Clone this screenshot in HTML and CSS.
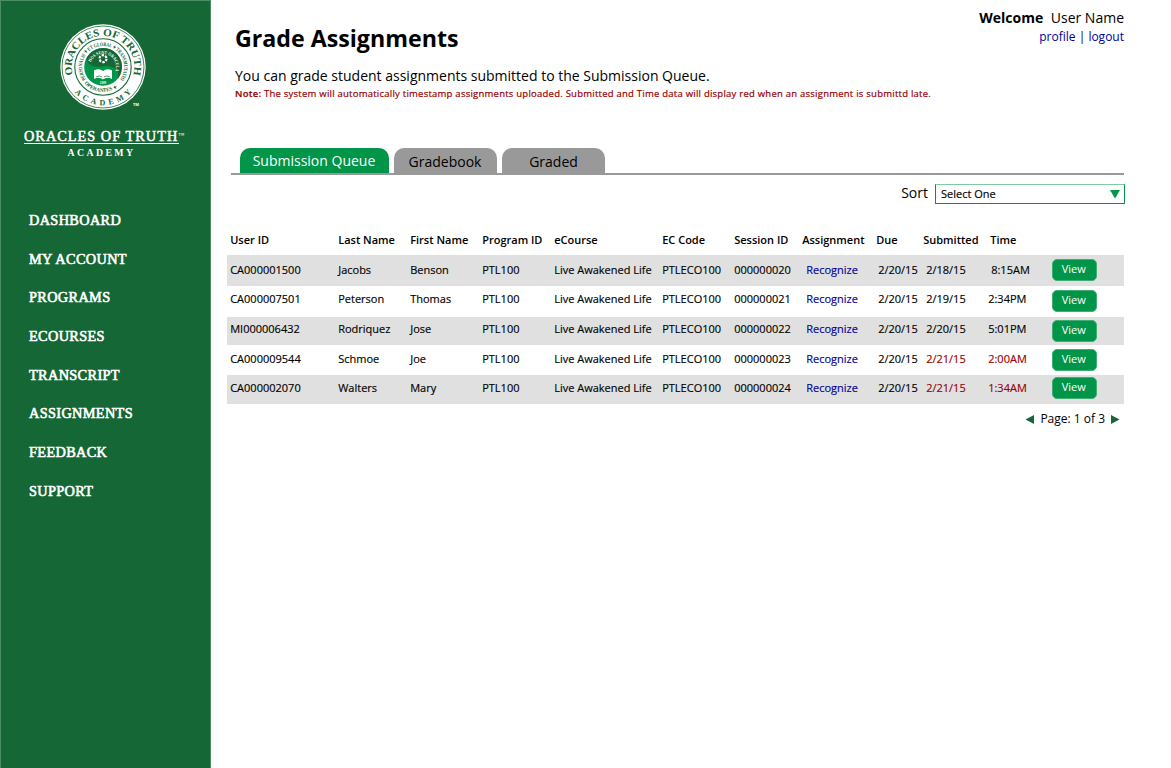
FILE: index.html
```html
<!DOCTYPE html>
<html lang="en">
<head>
<meta charset="utf-8">
<title>Grade Assignments</title>
<link rel="stylesheet" href="styles.css">
</head>
<body>
<div class="app">
  <aside class="sidebar">
    <svg class="seal" viewBox="-45 -45 90 90" aria-label="Oracles of Truth Academy">
      <defs>
        <path id="outer-arc" d="M0 31.2A31.2 31.2 0 1 1 .1 31.2"/>
        <path id="outer-bottom" d="M-38.2 0A38.2 38.2 0 0 0 38.2 0"/>
        <path id="inner-arc" d="M0 21A21 21 0 1 1 .1 21"/>
        <path id="inner-bottom" d="M-24.8 0A24.8 24.8 0 0 0 24.8 0"/>
        <path id="motto-arc" d="M-13 0A13 13 0 0 1 13 0A13 13 0 0 1 11.5 6"/>
      </defs>
      <circle r="42.7" fill="#fff"/>
      <circle r="41" fill="none" stroke="#156735" stroke-width=".8"/>
      <circle r="28.2" fill="#fff" stroke="#156735" stroke-width="1.1"/>
      <circle r="18.8" fill="#009548"/>
      <path d="M-16.3 -9.2A18.8 18.8 0 1 1 14.5 12C18 2 10 -1 2 -1C-8 1 -16 -1 -16.3 -9.2Z" fill="#156735"/>
      <g class="seal-text">
        <text font-size="10.4"><textPath href="#outer-arc" startOffset="50%" text-anchor="middle" textLength="114" lengthAdjust="spacingAndGlyphs">ORACLES OF TRUTH</textPath></text>
        <text font-size="8"><textPath href="#outer-bottom" startOffset="50%" text-anchor="middle" textLength="64">ACADEMY</textPath></text>
        <text font-size="5.4"><textPath href="#inner-arc" startOffset="50%" text-anchor="middle" textLength="92" lengthAdjust="spacingAndGlyphs">PERSONALIS ✦ ET GLOBAL ✦ TRANSMUTATIO</textPath></text>
        <text font-size="5.2"><textPath href="#inner-bottom" startOffset="46%" text-anchor="middle" textLength="36">OPERANTES ✦</textPath></text>
        <text font-size="4.6" class="motto"><textPath href="#motto-arc" startOffset="53%" text-anchor="middle" textLength="40" lengthAdjust="spacingAndGlyphs">HOS SUNT ORACULA</textPath></text>
        <text x="0" y="16.6" font-size="3.2" text-anchor="middle" class="motto">2009</text>
      </g>
      <circle cy="-8.3" r="3.5" fill="none" stroke="#fff" stroke-width="2.2" stroke-dasharray="2.4 1.265"/>
      <path d="M-9 3.5Q-4 1 0 4Q4 1 9 3.5V12Q4 9.5 0 12.5Q-4 9.5 -9 12Z" fill="#fff"/>
      <path d="M-7 10Q-3.5 8 -1 9.8M7 10Q3.5 8 1 9.8" fill="none" stroke="#156735" stroke-width=".7"/>
      <text x="30" y="38.7" font-size="4" class="trade">TM</text>
    </svg>
    <div class="brand">
      <div class="brand-name">ORACLES OF TRUTH<span class="tm">™</span></div>
      <div class="brand-sub">ACADEMY</div>
    </div>
    <nav class="nav">
      <a>DASHBOARD</a><a>MY ACCOUNT</a><a>PROGRAMS</a><a>ECOURSES</a><a>TRANSCRIPT</a><a>ASSIGNMENTS</a><a>FEEDBACK</a><a>SUPPORT</a>
    </nav>
  </aside>
  <main class="main">
    <header class="header">
      <div class="intro">
        <h1 class="title">Grade Assignments</h1>
        <p class="lead">You can grade student assignments submitted to the Submission Queue.</p>
        <p class="note"><b>Note:</b> The system will automatically timestamp assignments uploaded. Submitted and Time data will display red when an assignment is submittd late.</p>
      </div>
      <div class="user">
        <div class="welcome"><b>Welcome</b>User Name</div>
        <div class="links"><a>profile</a> | <a>logout</a></div>
      </div>
    </header>
    <div class="tabs">
      <div class="tab tab-active">Submission Queue</div>
      <div class="tab">Gradebook</div>
      <div class="tab tab-last">Graded</div>
    </div>
    <div class="sort">
      <span>Sort</span>
      <div class="select"><span>Select One</span><svg width="10" height="9" viewBox="0 0 10 9"><path d="M0 0H10L5 8.6Z" fill="#009548"/></svg></div>
    </div>
    <div class="table">
      <div class="row head"><span>User ID</span><span>Last Name</span><span>First Name</span><span>Program ID</span><span>eCourse</span><span>EC Code</span><span>Session ID</span><span>Assignment</span><span>Due</span><span>Submitted</span><span>Time</span></div>
      <div class="row r1"><span>CA000001500</span><span>Jacobs</span><span>Benson</span><span>PTL100</span><span>Live Awakened Life</span><span>PTLECO100</span><span>000000020</span><a>Recognize</a><span>2/20/15</span><span>2/18/15</span><span class="time">8:15AM</span><button class="view">View</button></div>
      <div class="row r2"><span>CA000007501</span><span>Peterson</span><span>Thomas</span><span>PTL100</span><span>Live Awakened Life</span><span>PTLECO100</span><span>000000021</span><a>Recognize</a><span>2/20/15</span><span>2/19/15</span><span class="time">2:34PM</span><button class="view">View</button></div>
      <div class="row r3"><span>MI000006432</span><span>Rodriquez</span><span>Jose</span><span>PTL100</span><span>Live Awakened Life</span><span>PTLECO100</span><span>000000022</span><a>Recognize</a><span>2/20/15</span><span>2/20/15</span><span class="time">5:01PM</span><button class="view">View</button></div>
      <div class="row r4"><span>CA000009544</span><span>Schmoe</span><span>Joe</span><span>PTL100</span><span>Live Awakened Life</span><span>PTLECO100</span><span>000000023</span><a>Recognize</a><span>2/20/15</span><span class="late">2/21/15</span><span class="time late">2:00AM</span><button class="view">View</button></div>
      <div class="row r5"><span>CA000002070</span><span>Walters</span><span>Mary</span><span>PTL100</span><span>Live Awakened Life</span><span>PTLECO100</span><span>000000024</span><a>Recognize</a><span>2/20/15</span><span class="late">2/21/15</span><span class="time late">1:34AM</span><button class="view">View</button></div>
    </div>
    <div class="pager">
      <svg width="9" height="9" viewBox="0 0 9 9"><path d="M9 0V9L.5 4.5Z" fill="#156735"/></svg>
      <span>Page: 1 of 3</span>
      <svg width="9" height="9" viewBox="0 0 9 9"><path d="M0 0V9L8.5 4.5Z" fill="#156735"/></svg>
    </div>
  </main>
</div>
</body>
</html>
```
FILE: styles.css
```css
* { box-sizing: border-box; }
body { margin: 0; background: #fff; color: #000; font-family: "Open Sans", sans-serif; }
.app { display: flex; width: 1171px; height: 768px; overflow: hidden; }
.sidebar { width: 211px; flex: none; background: #156735; border: 1px solid #4c8c66; border-bottom: 0; color: #fff; font-family: "Liberation Serif", serif; }
.seal { display: block; width: 90px; height: 90px; margin: 21px 0 0 57px; overflow: visible; }
.seal-text { font-family: "Liberation Serif", serif; font-weight: bold; fill: #156735; }
.seal-text .motto { fill: #fff; }
.trade { fill: #fff; font-family: "Open Sans", sans-serif; font-weight: bold; }
.brand { width: 155px; margin: 15px 0 0 23px; white-space: nowrap; }
.brand-name { height: 17px; line-height: 17px; border-bottom: 1px solid #fff; font-size: 14.3px; -webkit-text-stroke: .5px #fff; letter-spacing: 1.02px; }
.tm { font-size: 6px; vertical-align: 4px; letter-spacing: 0; -webkit-text-stroke: 0; }
.brand-sub { margin-top: 3px; line-height: 12px; text-align: center; font-size: 9.8px; font-weight: bold; letter-spacing: 2.4px; }
.nav { display: flex; flex-direction: column; margin: 46px 0 0 28px; }
.nav a { height: 38.7px; line-height: 30px; font-size: 14.3px; letter-spacing: .35px; -webkit-text-stroke: .6px #fff; white-space: nowrap; }
.main { width: 914px; padding-left: 16px; }
.header { display: flex; justify-content: space-between; width: 897px; height: 148px; padding-left: 8px; }
.intro { width: 720px; white-space: nowrap; }
.title { margin: 22px 0 0; font-size: 23.2px; line-height: 32px; font-weight: 700; }
.lead { margin: 12px 0 0; font-size: 14px; line-height: 20px; }
.note { margin: 0; font-size: 9.5px; line-height: 15px; color: #990000; letter-spacing: .24px; -webkit-text-stroke: .2px #990000; }
.note b { font-weight: 600; }
.user { text-align: right; white-space: nowrap; }
.welcome { margin-top: 8px; font-size: 14px; line-height: 20px; }
.welcome b { margin-right: 7.5px; }
.links { font-size: 12px; line-height: 18px; }
a { color: #000099; }
.nav a { color: #fff; }
.tabs { display: flex; gap: 5px; width: 893px; height: 27px; margin-left: 4px; padding-left: 9px; border-bottom: 2px solid #999; }
.tab { width: 103px; height: 25px; padding-right: 1px; border-radius: 10px 10px 0 0; background: #999; text-align: center; font-size: 14px; line-height: 27px; }
.tab-active { width: 149px; background: #009548; color: #fff; line-height: 25px; }
.tab-last { padding-right: 0; }
.sort { display: flex; justify-content: flex-end; gap: 7px; width: 898px; margin-top: 9px; font-size: 14px; line-height: 18px; }
.select { display: flex; align-items: center; justify-content: space-between; width: 190px; height: 20px; padding: 0 4px 0 5px; border: 1px solid #009548; border-top-color: #7ecaa2; font-size: 11px; -webkit-text-stroke: .15px; }
.table { width: 897px; margin-top: 28px; font-size: 11px; -webkit-text-stroke: .15px; }
.row { display: grid; grid-template-columns: 108px 72px 72px 72px 108px 72px 72px 72px 48px 62px 64px 45px; align-items: start; padding-left: 3.2px; line-height: 16px; white-space: nowrap; }
.row span, .row a { margin-top: var(--text-top); }
.head { height: 23px; font-weight: 600; --text-top: 0; -webkit-text-stroke: 0; }
.head span:nth-child(8) { margin-left: -4px; }
.head span:nth-child(9) { margin-left: -2px; }
.head span:nth-child(10) { margin-left: -3px; }
.head span:nth-child(11) { margin-left: 2px; }
.r1, .r3, .r5 { background: #e0e0e0; }
.r1 { height: 31px; --text-top: 7px; --btn-top: 4px; }
.r1 .time { margin-left: 3px; }
.r2 { height: 31px; --text-top: 5px; --btn-top: 4px; }
.r3 { height: 28px; --text-top: 4px; --btn-top: 3px; }
.r4 { height: 30px; --text-top: 6px; --btn-top: 4px; }
.r5 { height: 29px; --text-top: 5px; --btn-top: 2px; }
.late { color: #990000; }
.view { width: 45px; height: 22px; margin: var(--btn-top) 0 0; padding: 0 2px 2px 0; border: 1px solid #3fae74; border-radius: 5px; background: #009548; color: #fff; font: 11px/18px "Open Sans", sans-serif; -webkit-text-stroke: 0; }
.pager { display: flex; align-items: center; justify-content: flex-end; gap: 6px; width: 893px; margin-top: 6px; font-size: 12px; line-height: 18px; }
```
